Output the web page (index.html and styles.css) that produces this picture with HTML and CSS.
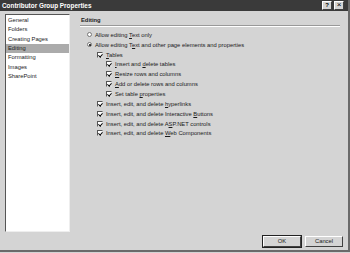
FILE: index.html
```html
<!DOCTYPE html>
<html>
<head>
<meta charset="utf-8">
<link rel="stylesheet" href="styles.css">
</head>
<body>
<div class="dialog">
  <div class="titlebar">
    <span class="title">Contributor Group Properties</span>
    <div class="tbtns">
      <span class="tbtn">?</span>
      <span class="tbtn close">×</span>
    </div>
  </div>
  <div class="main">
    <ul class="nav">
      <li>General</li>
      <li>Folders</li>
      <li>Creating Pages</li>
      <li class="sel">Editing</li>
      <li>Formatting</li>
      <li>Images</li>
      <li>SharePoint</li>
    </ul>
    <div class="panel">
      <div class="heading">Editing</div>
      <div class="rule"></div>
      <div class="opts">
        <div class="row"><span class="radio"></span><span>Allow editing <u>T</u>ext only</span></div>
        <div class="row"><span class="radio on"></span><span>Allow editing T<u>e</u>xt and other page elements and properties</span></div>
        <div class="row l1"><span class="chk"></span><span><u>T</u>ables</span></div>
        <div class="row l2"><span class="chk"></span><span><u>I</u>nsert and <u>d</u>elete tables</span></div>
        <div class="row l2"><span class="chk"></span><span><u>R</u>esize rows and columns</span></div>
        <div class="row l2"><span class="chk"></span><span><u>A</u>dd or delete rows and columns</span></div>
        <div class="row l2"><span class="chk"></span><span>Set table <u>p</u>roperties</span></div>
        <div class="row l1"><span class="chk"></span><span>Insert, edit, and delete <u>h</u>yperlinks</span></div>
        <div class="row l1"><span class="chk"></span><span>Insert, edit, and delete Interactive <u>B</u>uttons</span></div>
        <div class="row l1"><span class="chk"></span><span>Insert, edit, and delete A<u>S</u>P.NET controls</span></div>
        <div class="row l1"><span class="chk"></span><span>Insert, edit, and delete <u>W</u>eb Components</span></div>
      </div>
    </div>
  </div>
  <div class="footer">
    <span class="btn default">OK</span>
    <span class="btn">Cancel</span>
  </div>
</div>
</body>
</html>
```
FILE: styles.css
```css
html, body { margin: 0; padding: 0; }
body {
  width: 350px;
  height: 253px;
  background: #d4d4d4;
  font-family: "Liberation Sans", Arial, sans-serif;
  font-size: 5.8px;
  color: #1a1a1a;
  overflow: hidden;
}
.dialog {
  box-sizing: border-box;
  width: 350px;
  height: 252px;
  background: #d4d4d4;
  border-right: 2px solid #6a6a6a;
  border-bottom: 2px solid #6a6a6a;
  display: flex;
  flex-direction: column;
}
.titlebar {
  height: 12px;
  background: #3a3a3a;
  display: flex;
  align-items: center;
  justify-content: space-between;
  padding: 0 4px 0 2px;
}
.title {
  color: #fff;
  font-weight: bold;
  font-size: 6.4px;
}
.tbtns { display: flex; gap: 2px; }
.tbtn {
  box-sizing: border-box;
  width: 10px;
  height: 9px;
  background: #d4d4d4;
  border: 1px solid;
  border-color: #fff #404040 #404040 #fff;
  font-size: 6px;
  font-weight: bold;
  line-height: 7px;
  text-align: center;
  color: #000;
}
.tbtn.close { font-size: 8px; line-height: 6px; font-weight: normal; }
.main {
  display: flex;
  flex: 1;
  padding: 3px 0 0 5px;
}
.nav {
  list-style: none;
  margin: 0;
  padding: 1px 0 0 0;
  width: 65px;
  height: 218px;
  box-sizing: border-box;
  background: #fff;
  border-left: 1px solid #555;
  border-top: 1px solid #555;
  border-right: 1px solid #eee;
  border-bottom: 1px solid #eee;
}
.nav li {
  height: 9.33px;
  line-height: 9.33px;
  padding-left: 2px;
}
.nav li.sel { background: #ababab; }
.panel {
  flex: 1;
  padding: 2px 8px 0 10px;
}
.heading {
  font-weight: bold;
  line-height: 9px;
  padding-left: 1px;
}
.rule {
  height: 0;
  border-top: 1px solid #999;
  border-bottom: 1px solid #fff;
  margin: 0 0 3px 0;
}
.opts { padding-left: 7px; }
.row {
  display: flex;
  align-items: center;
  gap: 3px;
  height: 9.85px;
}
.row.l1 { padding-left: 10px; }
.row.l2 { padding-left: 19px; }
.radio {
  box-sizing: border-box;
  width: 5px;
  height: 5px;
  border-radius: 50%;
  background: #fff;
  border: 1px solid #777;
  position: relative;
}
.radio.on::after {
  content: "";
  position: absolute;
  left: 0.5px;
  top: 0.5px;
  width: 2px;
  height: 2px;
  border-radius: 50%;
  background: #000;
}
.chk {
  box-sizing: border-box;
  width: 6px;
  height: 6px;
  background: #fff;
  border: 1px solid;
  border-color: #555 #ddd #ddd #555;
  position: relative;
}
.chk::after {
  content: "";
  position: absolute;
  left: 1px;
  top: 0px;
  width: 1.5px;
  height: 3px;
  border-right: 1px solid #000;
  border-bottom: 1px solid #000;
  transform: rotate(40deg);
}
.footer {
  display: flex;
  justify-content: flex-end;
  gap: 4px;
  padding: 4px 5px 3px 0;
}
.btn {
  box-sizing: border-box;
  width: 38px;
  height: 11px;
  border: 1px solid;
  border-color: #fff #404040 #404040 #fff;
  text-align: center;
  line-height: 9px;
  background: #d4d4d4;
}
.btn.default { outline: 1px solid #222; }
```
